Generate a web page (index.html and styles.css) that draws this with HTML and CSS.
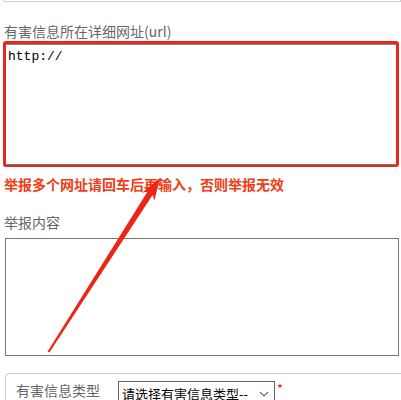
FILE: index.html
```html
<!DOCTYPE html>
<html lang="zh-CN">
<head>
  <meta charset="UTF-8">
  <meta name="viewport" content="width=device-width, initial-scale=1.0">
  <title>举报</title>
  <link rel="stylesheet" href="styles.css">
</head>
<body>
  <div class="prev-box"></div>

  <div class="field">
    <label class="label" for="url">有害信息所在详细网址(url)</label>
    <div class="highlight">
      <textarea id="url" class="url-input">http://</textarea>
    </div>
    <p class="warn">举报多个网址请回车后再输入，否则举报无效</p>
  </div>

  <div class="field">
    <label class="label label-content" for="content">举报内容</label>
    <textarea id="content" class="content-input"></textarea>
  </div>

  <div class="type-box">
    <span class="type-label">有害信息类型</span>
    <div class="select-wrap">
      <select class="type-select">
        <option>请选择有害信息类型--</option>
      </select>
      <svg class="chevron" width="10" height="6" viewBox="0 0 10 6"><path d="M1 1l4 4 4-4" fill="none" stroke="#666" stroke-width="1.1"/></svg>
    </div>
    <span class="required">*</span>
  </div>

  <!-- annotation arrow -->
  <svg class="arrow" width="401" height="400" viewBox="0 0 401 400">
    <polygon points="160,178 154.4,200.6 152.6,195 49.4,352.6 47.6,351.4 147.6,191.4 142,192.8" fill="#ec2519"/>
  </svg>
</body>
</html>
```

FILE: styles.css
```css
body {
  margin: 0;
  width: 401px;
  height: 400px;
  overflow: hidden;
  position: relative;
  background: #fff;
  font-family: "Microsoft YaHei", "Noto Sans CJK SC", sans-serif;
  font-size: 14px;
  color: #333;
}
.prev-box {
  height: 1px;
  margin-left: 3px;
  border: 1px solid #ccc;
  border-top: none;
  border-radius: 0 0 0 4px;
}
.field {
  margin: 0;
}
.label {
  display: block;
  margin-top: 19px;
  margin-left: 4px;
  line-height: 20px;
  color: #666;
}
.label-content {
  margin-top: 18px;
}
.highlight {
  margin-left: 3px;
  width: 390px;
  height: 120px;
  border: 3px solid #e8261e;
  border-radius: 3px;
}
.url-input {
  display: block;
  box-sizing: border-box;
  width: 100%;
  height: 121px;
  margin: 0;
  padding: 4px 2px;
  border: none;
  border-top: 1px solid #8a8a8a;
  border-bottom: 1px solid #777;
  font-family: "Liberation Mono", monospace;
  font-size: 13px;
  line-height: 16px;
  color: #000;
  resize: none;
  outline: none;
}
.warn {
  margin: 7px 0 0 4px;
  line-height: 20px;
  font-weight: bold;
  color: #ef3d14;
}
.content-input {
  display: block;
  box-sizing: border-box;
  width: 394px;
  height: 118px;
  margin: 6px 0 0 5px;
  border: 1px solid #777;
  resize: none;
  outline: none;
}
.type-box {
  display: flex;
  align-items: flex-start;
  margin: 17px 0 0 5px;
  padding: 7px 0 0 10px;
  height: 21px;
  border-top: 1px solid #ccc;
  border-left: 1px solid #ccc;
  border-radius: 4px 0 0 0;
}
.type-label {
  width: 102px;
  line-height: 18px;
  color: #666;
}
.select-wrap {
  position: relative;
}
.type-select {
  appearance: none;
  width: 157px;
  height: 24px;
  margin: 0;
  padding: 0 18px 0 3px;
  border: 1px solid #666;
  border-radius: 0;
  background: #fff;
  font-family: "Microsoft YaHei", "Noto Sans CJK SC", sans-serif;
  font-size: 13px;
  color: #000;
}
.chevron {
  position: absolute;
  left: 141px;
  top: 10px;
}
.required {
  margin-left: 2px;
  line-height: 16px;
  color: #e8261e;
  font-size: 13px;
}
.arrow {
  position: absolute;
  left: 0;
  top: 0;
  pointer-events: none;
}
```
